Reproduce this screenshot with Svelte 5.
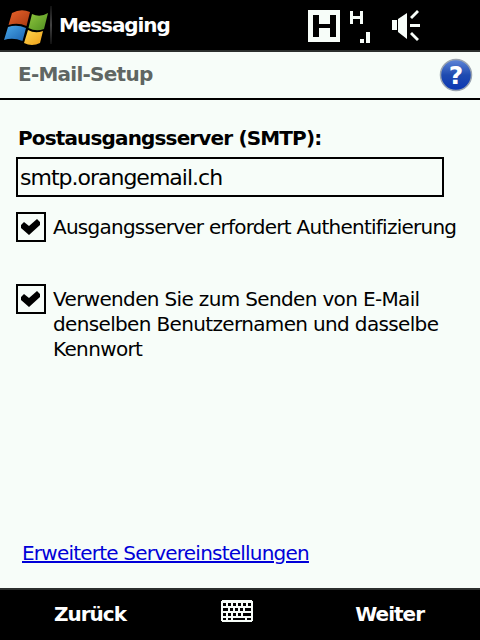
<script>
  let server = 'smtp.orangemail.ch';
  let needsAuth = true;
  let sameLogin = true;
</script>

<div class="screen">
  <header class="topbar">
    <svg class="winlogo" width="46" height="46" viewBox="0 0 46 46">
      <defs>
        <linearGradient id="red" x1="0" y1="0" x2="1" y2="1"><stop offset="0" stop-color="#e8622a"/><stop offset="1" stop-color="#a83a12"/></linearGradient>
        <linearGradient id="green" x1="0" y1="0" x2="1" y2="1"><stop offset="0" stop-color="#8fc63e"/><stop offset="1" stop-color="#4f8f20"/></linearGradient>
        <linearGradient id="blue" x1="0" y1="0" x2="1" y2="1"><stop offset="0" stop-color="#4aa8e8"/><stop offset="1" stop-color="#1a62b0"/></linearGradient>
        <linearGradient id="yellow" x1="0" y1="0" x2="1" y2="1"><stop offset="0" stop-color="#fdd650"/><stop offset="1" stop-color="#f0a018"/></linearGradient>
      </defs>
      <path d="M9 11 Q18 6 27 10 L23.500 24 Q15 20 5.500 23 Z" fill="url(#red)"/>
      <path d="M29 12 Q37 16 45 11 L41 27 Q33 30 25.500 26 Z" fill="url(#green)"/>
      <path d="M5 25 Q14 22 23 26 L19.500 39 Q10 35 1 38 Z" fill="url(#blue)"/>
      <path d="M25 28 Q32 32 40 29 L37 41 Q29 45 21 41 Z" fill="url(#yellow)"/>
    </svg>
    <span class="divider"></span>
    <span class="apptitle">Messaging</span>
    <svg class="status" width="116" height="36" viewBox="0 0 116 36" fill="#f7fdf9">
      <path fill-rule="evenodd" d="M0 3H32V35H0Z M5 8V30H11V21H22V30H28V8H22V17H11V8Z"/>
      <path d="M42 4H45V9H52V4H55V17H52V12H45V17H42Z"/>
      <path d="M52 32H56V36H52Z M58 25H62V36H58Z"/>
      <path d="M84 13H89V23H84Z M90 12 L99 6 V32 L90 25Z"/>
      <path d="M102 10 L109 3 L111 5 L104 12Z M102 17H112V20H102Z M102 27 L104 25 L111 32 L109 34Z"/>
    </svg>
  </header>

  <div class="titlebar">
    <h1>E-Mail-Setup</h1>
    <svg class="help" width="34" height="34" viewBox="0 0 34 34">
      <defs>
        <linearGradient id="helpfill" x1="0" y1="0" x2="0" y2="1"><stop offset="0" stop-color="#5f86d8"/><stop offset="0.5" stop-color="#1f4bb0"/><stop offset="1" stop-color="#0a36b4"/></linearGradient>
      </defs>
      <circle cx="17" cy="17" r="15.500" fill="url(#helpfill)" stroke="#9aa4b0" stroke-width="1.500"/>
      <text x="17" y="26" text-anchor="middle" class="helpmark">?</text>
    </svg>
  </div>

  <main class="content">
    <label class="fieldlabel" for="smtp">Postausgangsserver (SMTP):</label>
    <input id="smtp" type="text" bind:value={server} />

    <label class="check first">
      <input type="checkbox" bind:checked={needsAuth} />
      <span class="box">
        {#if needsAuth}
          <svg width="22" height="22" viewBox="0 0 22 22"><path d="M1 9 L4 6 L9 10 L17 3 L20 6 L20 9 L9 19 L1 12 Z"/></svg>
        {/if}
      </span>
      <span class="text">Ausgangsserver erfordert Authentifizierung</span>
    </label>

    <label class="check second">
      <input type="checkbox" bind:checked={sameLogin} />
      <span class="box">
        {#if sameLogin}
          <svg width="22" height="22" viewBox="0 0 22 22"><path d="M1 9 L4 6 L9 10 L17 3 L20 6 L20 9 L9 19 L1 12 Z"/></svg>
        {/if}
      </span>
      <span class="text">Verwenden Sie zum Senden von E-Mail denselben Benutzernamen und dasselbe Kennwort</span>
    </label>

    <a class="advanced" href="#advanced">Erweiterte Servereinstellungen</a>
  </main>

  <footer class="softkeys">
    <button>Zurück</button>
    <svg class="keyboard" width="32" height="22" viewBox="0 0 32 22">
      <path fill="#f7fdf9" d="M1 0H31V1H32V21H31V22H1V21H0V1H1Z"/>
      <g fill="#000">
        <path d="M2 3h3v3h-3z M7 3h3v3h-3z M12 3h3v3h-3z M17 3h3v3h-3z M22 3h3v3h-3z M27 3h3v3h-3z"/>
        <path d="M2 8h5v3h-5z M9 8h3v3h-3z M14 8h3v3h-3z M19 8h3v3h-3z M24 8h6v3h-6z"/>
        <path d="M2 13h3v3h-3z M7 13h3v3h-3z M12 13h3v3h-3z M17 13h3v3h-3z M22 13h8v3h-8z"/>
        <path d="M2 18h3v2h-3z M7 18h3v2h-3z M12 18h12v2h-12z M26 18h4v2h-4z"/>
      </g>
    </svg>
    <button>Weiter</button>
  </footer>
</div>

<style>
  :global(body) {
    margin: 0;
  }

  .screen {
    width: 480px;
    height: 640px;
    display: flex;
    flex-direction: column;
    background: #f7fdf9;
    color: #000;
    font-family: "DejaVu Sans", sans-serif;
    overflow: hidden;
  }

  .topbar {
    height: 50px;
    flex: none;
    display: flex;
    align-items: center;
    background: #000;
    border-bottom: 2px solid #2c302e;
    padding-left: 3px;
  }

  .winlogo {
    flex: none;
  }

  .divider {
    width: 2px;
    height: 38px;
    margin-left: 1px;
    background: linear-gradient(#111, #444 50%, #111);
  }

  .apptitle {
    margin-left: 7px;
    color: #fff;
    font-size: 20px;
    font-weight: 700;
    letter-spacing: -1.1px;
  }

  .status {
    margin-left: auto;
    margin-right: 56px;
  }

  .titlebar {
    height: 46px;
    flex: none;
    display: flex;
    align-items: center;
    justify-content: space-between;
    padding: 0 7px 0 18px;
    border-bottom: 2px solid #000;
  }

  h1 {
    margin: 0 0 2px;
    font-size: 20px;
    font-weight: 700;
    letter-spacing: -0.75px;
    color: #5f6663;
  }

  .helpmark {
    font-family: "DejaVu Sans", sans-serif;
    font-size: 25px;
    font-weight: 700;
    fill: #fff;
  }

  .content {
    flex: 1;
    display: flex;
    flex-direction: column;
    padding: 25px 36px 22px 16px;
  }

  .fieldlabel {
    margin-left: 2px;
    font-size: 20px;
    font-weight: 700;
    line-height: 26px;
    letter-spacing: -0.85px;
  }

  #smtp {
    box-sizing: border-box;
    width: 428px;
    height: 40px;
    margin-top: 6px;
    padding: 0 2px;
    border: 2px solid #000;
    border-radius: 0;
    outline: none;
    background: transparent;
    font: 22px "DejaVu Sans", sans-serif;
    letter-spacing: -1px;
    color: #000;
  }

  .check {
    display: flex;
    gap: 7px;
    width: 445px;
    font-size: 20px;
    line-height: 25px;
    letter-spacing: -0.75px;
  }

  .check input {
    display: none;
  }

  .check.first {
    margin-top: 15px;
    align-items: center;
  }

  .check.first .text {
    padding-top: 1px;
  }

  .check.second {
    margin-top: 42px;
    width: 430px;
    letter-spacing: -0.65px;
  }

  .check.second .text {
    padding-top: 3px;
  }

  .box {
    box-sizing: border-box;
    flex: none;
    width: 30px;
    height: 30px;
    border: 2px solid #000;
    display: flex;
    align-items: center;
    justify-content: center;
  }

  .box path {
    fill: #000;
  }

  .advanced {
    margin-top: auto;
    margin-left: 6px;
    color: #0000d8;
    font-size: 20px;
    line-height: 26px;
    letter-spacing: -0.78px;
  }

  .softkeys {
    height: 50px;
    flex: none;
    display: grid;
    grid-template-columns: 1fr 32px 1fr;
    align-items: center;
    background: #000;
    border-top: 2px solid #2c302e;
  }

  .softkeys button {
    border: 0;
    padding: 0 0 2px;
    background: none;
    color: #fff;
    font: 700 20px "DejaVu Sans", sans-serif;
    letter-spacing: -1px;
  }

  .softkeys button:first-child {
    justify-self: start;
    margin-left: 54px;
  }

  .softkeys button:last-child {
    justify-self: end;
    margin-right: 56px;
  }

  .keyboard {
    align-self: start;
    margin: 10px 0 0 -3px;
  }
</style>
